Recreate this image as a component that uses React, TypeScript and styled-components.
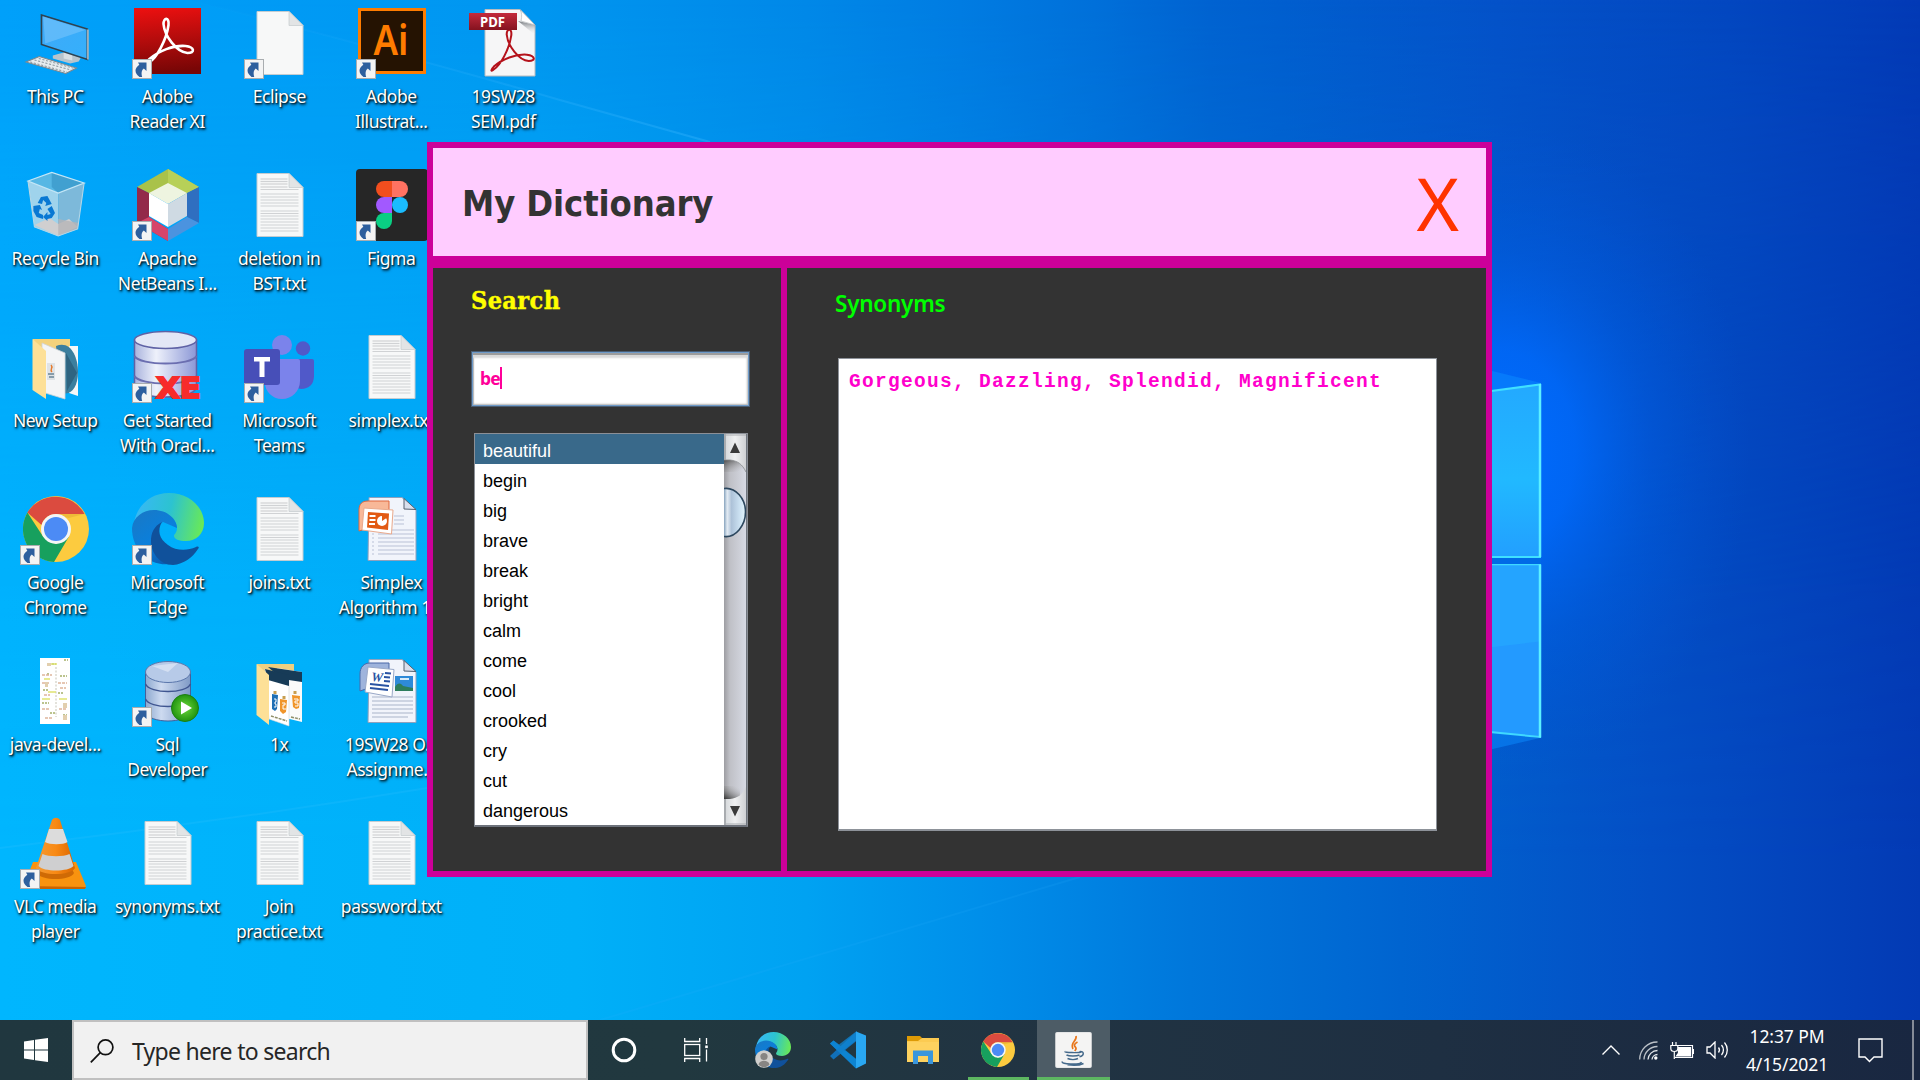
import React from 'react';
import styled, { createGlobalStyle } from 'styled-components';

const GlobalStyle = createGlobalStyle`
  html, body { margin: 0; padding: 0; overflow: hidden; }
  * { box-sizing: border-box; }
`;

const uiFont = `'Noto Sans', 'Open Sans', sans-serif`;

/* ---------- Desktop shell ---------- */

const Screen = styled.div`
  position: relative;
  width: 1920px;
  height: 1080px;
  overflow: hidden;
  display: flex;
  flex-direction: column;
  font-family: ${uiFont};
`;

const WallpaperSvg = styled.svg`
  position: absolute;
  inset: 0;
  width: 1920px;
  height: 1080px;
`;

const Desktop = styled.main`
  position: relative;
  flex: 1;
  padding-top: 7px;
`;

const IconGrid = styled.div`
  display: grid;
  grid-template-rows: repeat(6, 162px);
  grid-auto-columns: 112px;
  grid-auto-flow: column;
`;

const Shortcut = styled.div`
  display: flex;
  flex-direction: column;
  align-items: center;
`;

const IconBox = styled.div`
  position: relative;
  width: 72px;
  height: 72px;

  > svg {
    display: block;
    overflow: visible;
  }
`;

const Badge = styled.svg`
  position: absolute;
  left: 0;
  bottom: 0;
`;

const Label = styled.span`
  margin-top: 4.5px;
  padding-right: 1.5px;
  font-size: 17.5px;
  line-height: 25px;
  letter-spacing: -0.42px;
  color: #fff;
  text-align: center;
  white-space: pre;
  text-shadow: 1px 1px 2px rgba(0, 0, 0, 0.95), 1px 2px 3px rgba(0, 0, 0, 0.6);
`;

/* ---------- Dictionary window ---------- */

const magenta = '#cc0099';

const Frame = styled.section`
  position: absolute;
  left: 427px;
  top: 142px;
  width: 1065px;
  height: 735px;
  border: 6px solid ${magenta};
  background: #333;
  display: flex;
  flex-direction: column;
`;

const Header = styled.header`
  height: 120px;
  border-bottom: 12px solid ${magenta};
  background: #ffccff;
  display: flex;
  justify-content: space-between;
  align-items: center;
  padding: 0 27px 0 29px;
`;

const Title = styled.h1`
  margin: 4px 0 0;
  font: bold 36px/48px 'DejaVu Sans Condensed', 'DejaVu Sans', sans-serif;
  font-stretch: condensed;
  letter-spacing: -0.1px;
  color: #333;
`;

const CloseButton = styled.button`
  border: 0;
  padding: 2px 0 0;
  background: none;
  color: #ff3300;
  font: 72.5px/90px 'Noto Sans', sans-serif;
`;

const Body = styled.div`
  flex: 1;
  display: flex;
`;

const SearchPane = styled.div`
  width: 354px;
  border-right: 6px solid ${magenta};
  padding-left: 38px;
  display: flex;
  flex-direction: column;
`;

const SearchTitle = styled.h2`
  margin: 0;
  height: 83px;
  padding-top: 16.5px;
  font: bold 25px/32px 'DejaVu Serif Condensed', 'DejaVu Serif', serif;
  font-stretch: condensed;
  letter-spacing: 0.4px;
  -webkit-text-stroke: 0.4px #ffff00;
  color: #ffff00;
`;

const Field = styled.div`
  width: 279px;
  height: 56px;
  border: 2px solid #6f9bc9;
  outline: 1px solid #4a5d73;
  outline-offset: -1px;
  background: #fff;
  box-shadow: inset 0 2px 0 #9c9c9c, inset 0 5px 2px #dadada, inset 1px 0 1px #aaa, inset -1px -1px 2px #b5b5b5;
  padding: 0 0 2px 7px;
  display: flex;
  align-items: center;
  font: bold 17.5px/24px 'Noto Sans', sans-serif;
  letter-spacing: -0.8px;
  color: #ff0099;
`;

const Caret = styled.span`
  width: 2px;
  height: 22px;
  background: #ff0099;
`;

const ListBox = styled.div`
  margin: 26px 0 0 3px;
  width: 274px;
  height: 394px;
  border: 1px solid #8b8f96;
  border-bottom: 2px solid #6d727b;
  background: #fff;
  display: flex;
`;

const Words = styled.ul`
  flex: 1;
  margin: 0;
  padding: 0;
  list-style: none;
  overflow: hidden;
`;

const Word = styled.li<{ $selected?: boolean }>`
  height: 30px;
  padding: 4px 0 0 8px;
  font: 18px/26px 'Liberation Sans', Arial, sans-serif;
  color: ${(p) => (p.$selected ? '#fff' : '#000')};
  background: ${(p) => (p.$selected ? '#39698a' : 'transparent')};
`;

const ResultPane = styled.div`
  flex: 1;
  padding-left: 48px;
`;

const ResultTitle = styled.h2`
  margin: 0;
  height: 90px;
  padding-top: 20px;
  font: 600 22.5px/32px 'Noto Sans', sans-serif;
  letter-spacing: -0.25px;
  color: #00ff00;
`;

const ResultArea = styled.div`
  margin-left: 3px;
  width: 599px;
  height: 473px;
  border: 1px solid #8d9299;
  border-bottom-width: 2px;
  background: #fff;
  padding: 11px 10px;
  font: bold 19.5px/25px 'Liberation Mono', 'Courier New', monospace;
  letter-spacing: 1.3px;
  color: #ff00cc;
  white-space: pre;
`;

/* ---------- Taskbar ---------- */

const Taskbar = styled.footer`
  position: relative;
  height: 60px;
  display: flex;
  background: linear-gradient(90deg, #20373f 0%, #21383f 35%, #213442 52%, #1e2f42 75%, #192741 100%);
`;

const TaskButton = styled.div<{ $w: number; $active?: boolean }>`
  position: relative;
  width: ${(p) => p.$w}px;
  height: 60px;
  display: flex;
  align-items: center;
  justify-content: center;
  background: ${(p) => (p.$active ? '#4d5c66' : 'transparent')};
`;

const Running = styled.i<{ $w: number }>`
  position: absolute;
  bottom: 0;
  width: ${(p) => p.$w}px;
  height: 3px;
  background: #5db761;
`;

const SearchBox = styled.div`
  width: 516px;
  height: 60px;
  border: 2px solid #c0c0c0;
  background: #f1f1f1;
  display: flex;
  align-items: center;
  padding: 2px 0 0 16px;
  gap: 18px;
  font-size: 23px;
  letter-spacing: -0.72px;
  color: #262626;
`;

const Tray = styled.div`
  margin-left: auto;
  height: 60px;
  display: flex;
  align-items: center;
`;

const TrayIcons = styled.div`
  display: flex;
  align-items: center;
  gap: 12px;
`;

const Clock = styled.div`
  width: 96px;
  margin-left: 10px;
  text-align: center;
  color: #fff;
  font-size: 17.5px;
  line-height: 28px;
  letter-spacing: -0.1px;
`;

const Notifications = styled.svg`
  margin-left: 23px;
`;

const ShowDesktop = styled.div`
  width: 8px;
  height: 60px;
  margin-left: 29px;
  border-left: 2px solid #858c98;
`;

const IconHolder = styled.div`
  position: relative;
  width: 36px;
  height: 36px;
`;

const Profile = styled.svg`
  position: absolute;
  left: 0;
  bottom: 0;
`;

const WifiSvg = styled.svg`
  margin-left: 7px;
`;

/* ---------- Icon drawings ---------- */

const ShortcutBadge = () => (
  <Badge width="20" height="20" viewBox="0 0 20 20">
    <rect x=".5" y=".5" width="19" height="19" fill="#f4f4f4" stroke="#a9adb0" />
    <path d="M6 3.500h8.500v8.500l-2.700-2.600c-2 1.600-2.800 4-1.600 8.600H7.500c-5-4-5.500-8.500-.2-12.300z" fill="#2d5f9e" />
  </Badge>
);

const ThisPC = () => (
  <svg width="72" height="72" viewBox="0 0 72 72">
    <defs>
      <linearGradient id="pcScreen" x1="0" y1="0" x2="1" y2="1">
        <stop offset="0" stopColor="#3fa9f8" /><stop offset="1" stopColor="#35b0fb" />
      </linearGradient>
    </defs>
    <g transform="translate(1.500 .5) scale(1.080 1)">
      <path d="M29 48l10-3 16 5-2 4-8 2-16-5z" fill="#b8c4cc" />
      <path d="M39 44l8 3v6l-8-2z" fill="#d9e0e4" />
      <path d="M18.500 7.500L61 21.500V52L18.500 37z" fill="url(#pcScreen)" stroke="#30424f" strokeWidth="1.500" />
      <path d="M20 9l39 13.500L22 36z" fill="#7cc6fb" opacity=".55" />
      <path d="M61.500 22v30" stroke="#b9c0c5" strokeWidth="1.400" />
      <path d="M4 54.500L16.500 49 51 60.500 41 66z" fill="#e6ebee" stroke="#7b868d" />
      <path d="M8 54.500l34 10M12 52.500l34 10M16 51l33 10" stroke="#8d989f" strokeWidth="1" strokeDasharray="2 1.500" />
    </g>
  </svg>
);

const RecycleBin = () => (
  <svg width="72" height="72" viewBox="0 0 72 72">
    <g transform="translate(1.500 0) scale(1.080 1)">
      <path d="M6 12L28 3.500 58 14 34 24z" fill="#56b7e4" />
      <path d="M28 3.500V18l6 6 24-10z" fill="#3996c8" opacity=".7" />
      <path d="M6 12l28 12v43L12 58z" fill="#9fd3ec" />
      <path d="M58 14L34 24v43l18-7z" fill="#7db9da" />
      <path d="M12 56l14-7 8 6v12zM34 55l10-5 8 8-18 9z" fill="#d0cfd0" />
      <path d="M34 50v17l18-7 1-6z" fill="#b5b4b6" opacity=".8" />
      <path d="M6 12L28 3.500 58 14 34 24z" fill="none" stroke="#c4e6f6" strokeWidth="1.200" />
      <path d="M6 12l6 46 22 9 18-7 6-46" fill="none" stroke="#b7d7e6" strokeWidth="1" />
      <g fill="#0878d3">
        <path d="M15 34l3-6 6-1 3 6 1 2-6 2 1-3-3-3-1 4z" />
        <path d="M11 37l6-1 2 5-2-1-1 4 4 2v4l-6-2-3-6z" />
        <path d="M28 37l3 7-3 5-4 1v2l-4-4 4-5v3l3-1-3-5z" />
      </g>
    </g>
  </svg>
);

const NewSetup = () => (
  <svg width="72" height="72" viewBox="0 0 72 72">
    <path d="M13 8h37v48H13z" fill="#f3d27c" />
    <path d="M49 15h9v50l-9-3z" fill="#f5f7f8" />
    <path d="M36 15c14-6 22 10 22 26s-8 25-17 20z" fill="#3c7f9e" />
    <path d="M46 22l11 20-10 18z" fill="#2f6480" />
    <path d="M22 12l23 10v46l-23-7z" fill="#f4f5f6" stroke="#cfd3d5" strokeWidth=".8" />
    <rect x="27" y="32" width="8" height="17" fill="#dfe3e6" />
    <path d="M31 34c3 3-2 4 1 7" stroke="#e7792b" strokeWidth="1.400" fill="none" />
    <path d="M28 43h6M29 46h5" stroke="#6b8597" strokeWidth="1.500" />
    <path d="M12.500 8L26 20v48L12.500 59z" fill="#fde097" />
  </svg>
);

const ChromeMark = ({ size }: { size: number }) => (
  <svg width={size} height={size} viewBox="0 0 66 66">
    <circle cx="33" cy="33" r="33" fill="#fccb3f" />
    <path d="M4.400 16.500A33 33 0 0 1 61.600 18H33a15 15 0 0 0-14.500 11z" fill="#db4b3f" />
    <path d="M4.400 16.500A33 33 0 0 0 31 66l15-25.500-13 7.500L20 40.500z" fill="#17a05e" />
    <path d="M33 18h28.600l-16 4z" fill="#d9a12c" opacity=".4" />
    <circle cx="33" cy="33" r="15" fill="#f3f5f6" />
    <circle cx="33" cy="33" r="12" fill="#4c8bf5" />
  </svg>
);

const ChromeDesktop = () => (
  <svg width="72" height="72" viewBox="0 0 72 72">
    <g transform="translate(3 3)"><ChromeMark size={66} /></g>
  </svg>
);

const EdgeMark = ({ size }: { size: number }) => (
  <svg width={size} height={size} viewBox="0 0 72 72">
    <defs>
      <linearGradient id="edgeTop" x1="0" y1=".4" x2="1" y2=".55">
        <stop offset="0" stopColor="#38b8f6" /><stop offset=".5" stopColor="#2cc3d0" /><stop offset="1" stopColor="#69e957" />
      </linearGradient>
      <linearGradient id="edgeMid" x1="0" y1="0" x2=".6" y2="1">
        <stop offset="0" stopColor="#1a78c4" /><stop offset=".6" stopColor="#0b7fdb" /><stop offset="1" stopColor="#0a5fb5" />
      </linearGradient>
    </defs>
    <path d="M2 30C5 12 19 0 37 0c20 0 35 14 35 30 0 11-8 18-18 18-7 0-12-2-12-5 0-2 3-3 3-8 0-7-6-13-15-15C17 17 6 22 2 30z" fill="url(#edgeTop)" />
    <path d="M0 35c1-11 11-18 22-18 13 0 23 9 23 18l-14-6C24 32 20 42 24 54c3 8 9 14 15 17C17 74 0 57 0 35z" fill="url(#edgeMid)" />
    <path d="M30 29c-8 4-11 11-11 19 0 12 9 24 22 24 11-1 19-7 25-16 2-2 0-3-2-2-9 4-20 4-28-2-9-6-11-15-6-23z" fill="#10519b" />
  </svg>
);

const JavaDev = () => (
  <svg width="72" height="72" viewBox="0 0 72 72">
    <rect x="20" y="3" width="30" height="66" fill="#fff" />
    <path d="M44 5h4M32 9h4M27 19h2M40 21h7M23 35h5M38 38h5M22 48h7M30 58h5M43 60h4" stroke="#a5b06a" strokeWidth="1.500" strokeDasharray="2 1" />
    <path d="M22 20h10M22 28h8M38 28h9M24 40h6M40 33h6M22 54h7M39 54h8M25 63h8" stroke="#deb59c" strokeWidth="1.300" strokeDasharray="3 1" />
    <path d="M36 12v50" stroke="#b9b6a4" strokeWidth=".8" strokeDasharray="2 1.500" />
    <path d="M27 8h4v3h-4zM43 48h4v5h-4zM43 60h4v5h-4zM25 27h3v5h-3z" fill="#e2cfae" />
    <path d="M31 9h6M22 44h8M39 44h8M24 24h6M28 37h8" stroke="#e0e370" strokeWidth="1.500" />
  </svg>
);

const Vlc = () => (
  <svg width="72" height="72" viewBox="0 0 72 72">
    <defs>
      <linearGradient id="vlcOrange" x1="0" x2="1">
        <stop offset="0" stopColor="#f39a34" /><stop offset=".5" stopColor="#f98a14" /><stop offset="1" stopColor="#d96500" />
      </linearGradient>
    </defs>
    <path d="M13 45h43l10 24-1 2H3z" fill="#f8930f" />
    <path d="M4 69l62 1-1 2H3z" fill="#c86403" />
    <path d="M21 48h29l4 8c-4 8-33 8-37 0z" fill="#cf6a05" />
    <path d="M32 3c2-3 6-3 8 0l15 48c-5 8-34 8-39 0z" fill="url(#vlcOrange)" />
    <path d="M29 12h14l4.500 13c-4 3-18 3-22.500 0z" fill="#dcdcdc" />
    <path d="M22.500 37c6 3 21 3 27 0l4 12c-5 6-30 6-35 0z" fill="#cfcfd0" />
  </svg>
);

const AcrobatPath = ({ stroke, transform, w = 3.4 }: { stroke: string; transform?: string; w?: number }) => (
  <path
    transform={transform}
    d="M15 58C22 54 32 36 34 21c1-8-5-8-5-1 1 12 13 28 24 29 8 0 7-6-2-7-12-1-27 5-36 13-4 4-3 6 0 3z"
    fill="none"
    stroke={stroke}
    strokeWidth={w}
    strokeLinejoin="round"
  />
);

const AdobeReader = () => (
  <svg width="72" height="72" viewBox="0 0 72 72">
    <defs>
      <linearGradient id="reader" x1="0" y1="0" x2=".1" y2="1">
        <stop offset="0" stopColor="#ee1010" /><stop offset=".5" stopColor="#b50c0c" /><stop offset="1" stopColor="#790606" />
      </linearGradient>
    </defs>
    <rect x="2" y="1" width="67" height="66" fill="url(#reader)" />
    <AcrobatPath stroke="#fff" w={2.6} transform="translate(2.500 -3)" />
  </svg>
);

const NetBeans = () => (
  <svg width="72" height="72" viewBox="0 0 72 72">
    <path d="M36 0L67 18 36 34 5 18z" fill="#a9c24a" />
    <path d="M36 0L67 18 55 24 36 14z" fill="#b7d058" />
    <path d="M5 18l12 6v24l19 12v12L5 54z" fill="#93294a" />
    <path d="M5 54l12-6 19 12v12z" fill="#d6456a" />
    <path d="M67 18v36L55 48V24z" fill="#2f6fc0" />
    <path d="M67 54L36 72V60l19-12z" fill="#4b93df" />
    <path d="M36 14l19 10-19 11-19-11z" fill="#eef4e0" />
    <path d="M17 24l19 11v23L17 47z" fill="#fff" />
    <path d="M55 24L36 35v23l19-11z" fill="#cfdae3" />
  </svg>
);

const OracleXE = () => (
  <svg width="72" height="72" viewBox="0 0 72 72">
    <defs>
      <linearGradient id="xe" x1="0" x2="1">
        <stop offset="0" stopColor="#a9b3dd" /><stop offset=".35" stopColor="#eef1fb" /><stop offset="1" stopColor="#8b97d6" />
      </linearGradient>
    </defs>
    <path d="M2.500 9v48c4 12 58 12 62 0V9z" fill="url(#xe)" stroke="#5f62a5" strokeWidth="1.500" />
    <path d="M2.500 25c5 10 57 10 62 0M2.500 45c5 10 57 10 62 0" fill="none" stroke="#6b6eb0" strokeWidth="2" />
    <ellipse cx="33.500" cy="9" rx="31" ry="8.500" fill="#e3e7f6" stroke="#5f62a5" strokeWidth="1.500" />
    <text x="24" y="67" fontFamily="DejaVu Sans" fontWeight="bold" fontSize="29" fill="#f72b2b" stroke="#f72b2b" strokeWidth="2" textLength="45" lengthAdjust="spacingAndGlyphs">XE</text>
  </svg>
);

const SqlDeveloper = () => (
  <svg width="72" height="72" viewBox="0 0 72 72">
    <defs>
      <linearGradient id="sqlBody" x1="0" x2="1">
        <stop offset="0" stopColor="#8ea9cf" /><stop offset=".35" stopColor="#cddaf0" /><stop offset="1" stopColor="#7f9ac6" />
      </linearGradient>
      <radialGradient id="sqlPlay"><stop offset="0" stopColor="#6cd83a" /><stop offset="1" stopColor="#219410" /></radialGradient>
    </defs>
    <path d="M13.500 17v40c3 12 42 12 45 0V17z" fill="url(#sqlBody)" stroke="#44609a" />
    <path d="M13.500 29c4 10 41 10 45 0M13.500 44c4 10 41 10 45 0" fill="none" stroke="#3f5590" strokeWidth="1.500" />
    <ellipse cx="36" cy="17" rx="22.500" ry="10.500" fill="#b7cae8" stroke="#5a76ab" />
    <path d="M20 11l16 6 10-9" fill="#dfe8f6" opacity=".7" />
    <circle cx="53" cy="53" r="13.500" fill="url(#sqlPlay)" stroke="#1c7f12" />
    <path d="M49 46.500v13l11-6.500z" fill="#fff" />
  </svg>
);

const paperLines = [8, 10.5, 13, 16, 18.5, 23, 26, 29, 32, 35, 40, 42.5, 45, 48, 51, 54, 57, 60];

const Paper = ({ lined }: { lined?: boolean }) => (
  <svg width="72" height="72" viewBox="0 0 72 72">
    <path d="M13 4.500h32L59 18.500V67.500H13z" fill="#f7f8f8" stroke="#c3ccd1" />
    {lined &&
      paperLines.map((y) => (
        <path key={y} d={`M16.500 ${y + 2}h${y < 18 ? 27 : 38}`} stroke="#d0d2d4" strokeWidth="1.200" />
      ))}
    <path d="M45 4.500V18.500H59z" fill="#e2e4e5" stroke="#c9ced1" strokeWidth=".8" />
  </svg>
);

const Teams = () => (
  <svg width="72" height="72" viewBox="0 0 72 72">
    <circle cx="38" cy="14" r="10" fill="#7b83eb" />
    <circle cx="59" cy="17.500" r="7.200" fill="#5059c9" />
    <path d="M48 28h20a2 2 0 0 1 2 2v15c0 8-5 13-13 13l-9-2z" fill="#5059c9" />
    <path d="M30 28h24a2 2 0 0 1 2 2v20c0 10-8 18-18 18s-17-8-17-16z" fill="#7b83eb" />
    <rect x="0" y="18" width="36" height="36" rx="3" fill="#474fb8" />
    <path d="M10 26h16v4.500h-5.500v15.500h-5v-15.500H10z" fill="#fff" />
  </svg>
);

const FolderShots = () => (
  <svg width="72" height="72" viewBox="0 0 72 72">
    <path d="M13 9h37v48H13z" fill="#eecf80" />
    <path d="M33 13l25 4v50l-25-6z" fill="#fbfbfa" />
    <path d="M24 12l34 5v10l-20-3z" fill="#173b57" />
    <path d="M21 14l24 11v46l-20-7z" fill="#fff" stroke="#d4d7d8" strokeWidth=".6" />
    <path d="M21 14l24 6v11l-21-6z" fill="#173b57" />
    <path d="M28 39l6 1-1 14-2 2-3-2z" fill="#1f6fb5" />
    <path d="M36 44l7 1-1 12-3 2-3-3z" fill="#f0952a" />
    <path d="M48 40l8 1-1 12-3 1-3-2z" fill="#f0952a" />
    <path d="M30 44h2v3h-1v2h1v3h-2M38 48h3v2h-2v4h3M50 44h4v2h-3v2h3v3h-3" stroke="#fff" fill="none" strokeWidth="1" />
    <path d="M31 36v3M40 41v3M51 36v3" stroke="#c79f52" strokeWidth="3" />
    <path d="M27 61l16 5M47 62l9 2" stroke="#8f8f6a" strokeWidth="1.500" strokeDasharray="3 1" />
    <path d="M12.500 9L25 20v50L12.500 60z" fill="#fde097" />
  </svg>
);

const Illustrator = () => (
  <svg width="72" height="72" viewBox="0 0 72 72">
    <rect x="3.500" y="2.500" width="65" height="63" fill="#251302" stroke="#ff7c00" strokeWidth="3" />
    <text x="17.500" y="48" fontFamily="Noto Sans" fontWeight="600" fontSize="42" fill="#ff7c00" textLength="35" lengthAdjust="spacingAndGlyphs">Ai</text>
  </svg>
);

const Figma = () => (
  <svg width="72" height="72" viewBox="0 0 72 72">
    <rect width="72" height="72" rx="4" fill="#262626" />
    <path d="M36 12v16h-8a8 8 0 0 1 0-16z" fill="#f24e1e" />
    <path d="M36 12h8a8 8 0 0 1 0 16h-8z" fill="#ff7262" />
    <path d="M36 28v16h-8a8 8 0 0 1 0-16z" fill="#a259ff" />
    <circle cx="44" cy="36" r="8" fill="#1abcfe" />
    <path d="M36 44v8a8 8 0 1 1-8-8z" fill="#0acf83" />
  </svg>
);

const OfficeSheet = () => (
  <>
    <path d="M13 4.500h33L60 17v50.500H12z" fill="#f1f4fb" stroke="#8fa1bd" />
    <path d="M48 5.500V16l12 .5z" fill="#d9dfec" stroke="#55606f" strokeWidth="1" />
  </>
);

const PowerPoint = () => (
  <svg width="72" height="72" viewBox="0 0 72 72">
    <OfficeSheet />
    <path d="M38 23h10M38 27h10M38 31h10M16 37h42M22 41h36M22 45h36M22 49h36M22 53h36M22 57h36M22 61h36M16 41h2M16 45h2M16 49h2M16 53h2M16 57h2M16 61h2" stroke="#b9c1d6" />
    <path d="M3 38V17c0-6 3-9 9-9h21v20z" fill="#f8b898" stroke="#e0673c" />
    <path d="M8 15l29 2L35.500 41 6 37z" fill="#fff" stroke="#e9a98c" />
    <path d="M12 19l21 1.500L32 37l-21-2.500z" fill="#e25a13" />
    <path d="M13.500 23h6M13.500 27h6M13 31h6" stroke="#fff" strokeWidth="2" />
    <circle cx="26" cy="28" r="5" fill="#fff" /><path d="M26 28V22l6 2z" fill="#e25a13" />
  </svg>
);

const WordDoc = () => (
  <svg width="72" height="72" viewBox="0 0 72 72">
    <OfficeSheet />
    <path d="M16 42h41M16 46h41M16 50h41M16 54h41M16 58h41M16 62h36" stroke="#a9b4c9" />
    <rect x="39" y="21" width="18" height="15" fill="#2e8ad8" />
    <path d="M39 32c3-5 6-4 8-1l10 2v3H39z" fill="#2d7d5c" /><path d="M44 24h9" stroke="#d7ecfa" strokeWidth="2" />
    <path d="M4 36V19c0-7 4-11 10-11h19v18z" fill="#9fb4dc" stroke="#4a68a8" />
    <path d="M12 12l26 2.500L36 42 9 37z" fill="#fff" stroke="#9aa9c8" />
    <text x="15" y="26" fontFamily="Liberation Serif" fontWeight="bold" fontStyle="italic" fontSize="13" fill="#2a54a3" transform="rotate(5 14 26)">W</text>
    <path d="M29 18l6 .5M28 22l6 .5M28 26l6 .5M14 29l19 2M14 33l18 2" stroke="#2a54a3" strokeWidth="2" />
  </svg>
);

const PdfFile = () => (
  <svg width="72" height="72" viewBox="0 0 72 72">
    <defs>
      <linearGradient id="pdfTag" x1="0" x2="0" y1="0" y2="1">
        <stop offset="0" stopColor="#c42b3c" /><stop offset="1" stopColor="#84121f" />
      </linearGradient>
      <linearGradient id="pdfCurl" x1="0" x2="0" y1="0" y2="1">
        <stop offset="0" stopColor="#73787d" /><stop offset="1" stopColor="#f6f6f7" stopOpacity="0" />
      </linearGradient>
    </defs>
    <path d="M17 2.500h35L67 18v51H17z" fill="#f6f6f7" stroke="#b9bcc0" />
    <path d="M50 14l17 4v10z" fill="url(#pdfCurl)" />
    <path d="M52 2.500L67 18l-14-4c1-5 1-8-1-11.500z" fill="#fff" stroke="#a8acb0" strokeWidth=".6" />
    <AcrobatPath stroke="#b5121b" w={2.2} transform="translate(12 9) scale(.92)" />
    <rect x="1" y="6" width="48" height="17" fill="url(#pdfTag)" />
    <text x="12" y="19.500" fontFamily="Noto Sans" fontWeight="bold" fontSize="15" fill="#fff" textLength="25" lengthAdjust="spacingAndGlyphs">PDF</text>
  </svg>
);

const Wallpaper = () => (
  <WallpaperSvg viewBox="0 0 1920 1080">
    <defs>
      <linearGradient id="skyTop">
        <stop offset="0" stopColor="#009ffa" /><stop offset=".28" stopColor="#0096f0" /><stop offset=".42" stopColor="#0088e8" />
        <stop offset=".5" stopColor="#007ce2" /><stop offset=".57" stopColor="#0070da" /><stop offset=".63" stopColor="#0063d1" />
        <stop offset=".78" stopColor="#0452c9" /><stop offset=".9" stopColor="#0347c0" /><stop offset="1" stopColor="#033ab6" />
      </linearGradient>
      <linearGradient id="skyBottom">
        <stop offset="0" stopColor="#00b6fe" /><stop offset=".3" stopColor="#00b0f8" /><stop offset=".42" stopColor="#00a2f2" />
        <stop offset=".52" stopColor="#008de9" /><stop offset=".62" stopColor="#0077db" /><stop offset=".73" stopColor="#0064d0" />
        <stop offset=".86" stopColor="#034fc5" /><stop offset="1" stopColor="#033ab4" />
      </linearGradient>
      <linearGradient id="fade" x1="0" y1="0" x2="0" y2="1">
        <stop offset="0" stopColor="#000" /><stop offset=".55" stopColor="#d8d8d8" /><stop offset=".8" stopColor="#fff" />
      </linearGradient>
      <mask id="lower"><rect width="1920" height="1080" fill="url(#fade)" /></mask>
      <radialGradient id="glow">
        <stop offset="0" stopColor="#006cff" /><stop offset=".3" stopColor="#0069fb" stopOpacity=".85" />
        <stop offset=".6" stopColor="#0060ea" stopOpacity=".4" /><stop offset="1" stopColor="#0055d8" stopOpacity="0" />
      </radialGradient>
      <linearGradient id="paneTop" x1="0" y1="0" x2="0" y2="1">
        <stop offset="0" stopColor="#23a9ff" /><stop offset=".55" stopColor="#21b9ff" /><stop offset="1" stopColor="#229fff" />
      </linearGradient>
      <linearGradient id="ray"><stop offset="0" stopColor="#3db8ff" stopOpacity="0" /><stop offset="1" stopColor="#3db8ff" stopOpacity=".5" /></linearGradient>
    </defs>
    <rect width="1920" height="1080" fill="url(#skyTop)" />
    <rect width="1920" height="1080" fill="url(#skyBottom)" mask="url(#lower)" />
    <ellipse cx="1500" cy="450" rx="250" ry="330" fill="url(#glow)" />
    <path d="M190 0C300 28 430 62 560 100L710 142H427V600H0V0z" fill="#00b0ff" opacity=".1" />
    <path d="M190 0C300 28 430 62 560 100L710 142" fill="none" stroke="url(#ray)" strokeWidth="2" opacity=".7" />
    <path d="M0 848Q220 822 440 786" fill="none" stroke="#35c4ff" strokeWidth="2" opacity=".2" />
    <path d="M600 1020L1080 877" fill="none" stroke="#2aaeff" strokeWidth="2" opacity=".14" />
    <path d="M1480 368l61 15-61 9zM1480 731v21l60-14z" fill="#0c8cff" opacity=".5" />
    <path d="M1480 392.500L1540 384.500V557H1480z" fill="url(#paneTop)" stroke="#3fe0ff" strokeWidth="2" />
    <path d="M1480 564.500H1540V737L1480 731z" fill="#239aff" stroke="#3fd8ff" strokeWidth="2" />
    <path d="M1480 648.500l60-7V565.500h-60z" fill="#24a6ff" opacity=".8" />
    <path d="M1540 384v173M1540 564.500v173" stroke="#5cf0ff" strokeWidth="2.500" />
    <rect x="1480" y="558" width="61" height="6" fill="#006ae6" />
  </WallpaperSvg>
);

/* ---------- Scroll bar ---------- */

const ScrollBar = () => (
  <svg width="23" height="391" viewBox="0 0 23 391">
    <defs>
      <linearGradient id="track"><stop offset="0" stopColor="#9d9da2" /><stop offset=".25" stopColor="#bfc0c6" /><stop offset="1" stopColor="#d8dbe5" /></linearGradient>
      <linearGradient id="btn"><stop offset="0" stopColor="#d2d5d8" /><stop offset=".5" stopColor="#eff0f1" /><stop offset="1" stopColor="#cfd1d4" /></linearGradient>
      <linearGradient id="thumb">
        <stop offset="0" stopColor="#87a3bd" /><stop offset=".15" stopColor="#e3ebf3" /><stop offset=".35" stopColor="#adc2d8" />
        <stop offset=".7" stopColor="#c9dff0" /><stop offset="1" stopColor="#e2f5fc" />
      </linearGradient>
      <linearGradient id="shade" x1="0" x2=".7" y1="0" y2="1"><stop offset="0" stopColor="#444" /><stop offset="1" stopColor="#aaa" stopOpacity="0" /></linearGradient>
      <linearGradient id="shadeUp" x1="0" x2=".7" y1="1" y2="0"><stop offset="0" stopColor="#333" /><stop offset="1" stopColor="#aaa" stopOpacity="0" /></linearGradient>
    </defs>
    <rect width="23" height="391" fill="url(#track)" />
    <rect y="25" width="20" height="13" fill="url(#shade)" />
    <rect y="352" width="16" height="13" fill="url(#shadeUp)" />
    <path d="M0 0h22v38c-4-8-8-11-16-12H0z" fill="url(#btn)" />
    <path d="M0 26h6c8 1 12 4 16 12" fill="none" stroke="#85888c" strokeWidth=".8" />
    <path d="M0 391h22v-38c-4 8-8 11-16 12H0z" fill="url(#btn)" />
    <path d="M1 0v26M1 365v26" stroke="#9a9da1" strokeWidth="1.500" />
    <path d="M0 1h22M0 390h22" stroke="#a9acb0" strokeWidth="1" />
    <path d="M6 19h10L11 8.500zM6 372h10l-5 10.500z" fill="#3a3a3a" />
    <path d="M0 54.500C12 53 21.500 65 21.500 78S12 104 0 102.500z" fill="url(#thumb)" />
    <path d="M0 54.500C12 53 21.500 65 21.500 78S12 104 0 102.500" fill="none" stroke="#2c475e" strokeWidth="1.600" />
    <path d="M22.500 0v391" stroke="#6f757d" />
  </svg>
);

/* ---------- Data ---------- */

type Item = { label: string; icon: React.ReactNode; link?: boolean };

const items: Item[] = [
  { label: 'This PC', icon: <ThisPC /> },
  { label: 'Recycle Bin', icon: <RecycleBin /> },
  { label: 'New Setup', icon: <NewSetup /> },
  { label: 'Google\nChrome', icon: <ChromeDesktop />, link: true },
  { label: 'java-devel...', icon: <JavaDev /> },
  { label: 'VLC media\nplayer', icon: <Vlc />, link: true },
  { label: 'Adobe\nReader XI', icon: <AdobeReader />, link: true },
  { label: 'Apache\nNetBeans I...', icon: <NetBeans />, link: true },
  { label: 'Get Started\nWith Oracl...', icon: <OracleXE />, link: true },
  { label: 'Microsoft\nEdge', icon: <EdgeMark size={72} />, link: true },
  { label: 'Sql\nDeveloper', icon: <SqlDeveloper />, link: true },
  { label: 'synonyms.txt', icon: <Paper lined /> },
  { label: 'Eclipse', icon: <Paper />, link: true },
  { label: 'deletion in\nBST.txt', icon: <Paper lined /> },
  { label: 'Microsoft\nTeams', icon: <Teams />, link: true },
  { label: 'joins.txt', icon: <Paper lined /> },
  { label: '1x', icon: <FolderShots /> },
  { label: 'Join\npractice.txt', icon: <Paper lined /> },
  { label: 'Adobe\nIllustrat...', icon: <Illustrator />, link: true },
  { label: 'Figma', icon: <Figma />, link: true },
  { label: 'simplex.txt', icon: <Paper lined /> },
  { label: 'Simplex\nAlgorithm 1...', icon: <PowerPoint /> },
  { label: '19SW28 O...\nAssignme...', icon: <WordDoc /> },
  { label: 'password.txt', icon: <Paper lined /> },
  { label: '19SW28\nSEM.pdf', icon: <PdfFile /> },
];

const words = [
  'beautiful', 'begin', 'big', 'brave', 'break', 'bright', 'calm',
  'come', 'cool', 'crooked', 'cry', 'cut', 'dangerous',
];

export default function App() {
  return (
    <Screen>
      <GlobalStyle />
      <Wallpaper />
      <Desktop>
        <IconGrid>
          {items.map((it) => (
            <Shortcut key={it.label}>
              <IconBox>
                {it.icon}
                {it.link && <ShortcutBadge />}
              </IconBox>
              <Label>{it.label}</Label>
            </Shortcut>
          ))}
        </IconGrid>

        <Frame>
          <Header>
            <Title>My Dictionary</Title>
            <CloseButton>X</CloseButton>
          </Header>
          <Body>
            <SearchPane>
              <SearchTitle>Search</SearchTitle>
              <Field>be<Caret /></Field>
              <ListBox>
                <Words>
                  {words.map((w, i) => (
                    <Word key={w} $selected={i === 0}>{w}</Word>
                  ))}
                </Words>
                <ScrollBar />
              </ListBox>
            </SearchPane>
            <ResultPane>
              <ResultTitle>Synonyms</ResultTitle>
              <ResultArea>Gorgeous, Dazzling, Splendid, Magnificent</ResultArea>
            </ResultPane>
          </Body>
        </Frame>
      </Desktop>

      <Taskbar>
        <TaskButton $w={72}>
          <svg width="24" height="24" viewBox="0 0 24 24" fill="#fff">
            <path d="M0 3.400L10 2v9.500H0zM11 1.800L24 0v11.500H11zM0 12.500h10V22L0 20.600zM11 12.500h13V24l-13-1.800z" />
          </svg>
        </TaskButton>
        <SearchBox>
          <svg width="24" height="24" viewBox="0 0 24 24" fill="none" stroke="#111" strokeWidth="1.700">
            <circle cx="15.500" cy="8.300" r="7.400" /><path d="M10.300 13.700L.8 23.300" />
          </svg>
          Type here to search
        </SearchBox>
        <TaskButton $w={72}>
          <svg width="26" height="26" viewBox="0 0 26 26"><circle cx="13" cy="13" r="10.800" fill="none" stroke="#fff" strokeWidth="3" /></svg>
        </TaskButton>
        <TaskButton $w={72}>
          <svg width="24" height="24" viewBox="0 0 24 24" fill="none" stroke="#fff" strokeWidth="1.300">
            <path d="M.7 0v3.500h15V0M.7 24v-3.500h15V24" /><rect x=".7" y="6.500" width="15" height="11" />
            <path d="M22.500 0v6M22.500 11.500V23.500" /><rect x="21.200" y="7.500" width="2.600" height="2.600" fill="#fff" stroke="none" />
          </svg>
        </TaskButton>
        <TaskButton $w={82}>
          <IconHolder>
            <EdgeMark size={36} />
            <Profile width="18" height="18" viewBox="0 0 18 18">
              <circle cx="9" cy="9" r="8.800" fill="#d0cfcd" />
              <circle cx="9" cy="6.500" r="3.600" fill="#878583" /><path d="M3.500 14.500c1-5 10-5 11 0-3 3.500-8 3.500-11 0z" fill="#878583" />
            </Profile>
          </IconHolder>
        </TaskButton>
        <TaskButton $w={68}>
          <svg width="36" height="38" viewBox="0 0 36 38">
            <path d="M0 12.500l3.500-3 24 19.500L26 37.500z" fill="#0a7fcb" />
            <path d="M0 25l3.500 3.500L27 9.500V0z" fill="#1170b8" />
            <path d="M26 .5L36 4.500v28L26 37.500z" fill="#29a7f2" />
            <path d="M26 .5v9L14 19l12 9.500v9L0 12.500 3.500 9.500 9 13.600z" fill="#0f86d4" opacity=".75" />
          </svg>
        </TaskButton>
        <TaskButton $w={82}>
          <svg width="32" height="28" viewBox="0 0 32 28">
            <path d="M0 0h13l2 2-1 4H0z" fill="#dd9a05" /><path d="M0 5h11l4-3h17v24H0z" fill="#fccb52" />
            <path d="M0 6h32v20H0z" fill="#ffd465" opacity=".7" />
            <path d="M6 28V14.500h20V28h-5v-8H11v8z" fill="#3a96dc" />
          </svg>
        </TaskButton>
        <TaskButton $w={68}>
          <ChromeMark size={34} />
          <Running $w={61} />
        </TaskButton>
        <TaskButton $w={5} />
        <TaskButton $w={73} $active>
          <svg width="37" height="36" viewBox="0 0 36 36" fill="none">
            <rect width="36" height="36" rx="2" fill="#f4f4f3" stroke="#d0d3d5" strokeWidth=".8" />
            <path d="M20.500 4c1.500 5-6.500 6.500-3 13M22 10c-4 2-3.500 4-1.800 5.500.8 1.200 0 2.500-1 3.500" stroke="#e8761b" strokeWidth="1.700" />
            <path d="M10 19.500c-3 1.300 15 1.600 16 .2M11 23c3 1.500 10 1.300 13 0M12 26.500c3 1.200 8 1.200 10.500 0M24 19.700c5-1 5 4 0 5M7 29.500c-3 3 18 3.500 19 .5M12 32.800c6 .8 12 .6 16-1.300" stroke="#44698a" strokeWidth="1.500" />
          </svg>
          <Running $w={73} />
        </TaskButton>

        <Tray>
          <TrayIcons>
            <svg width="18" height="10" viewBox="0 0 18 10" fill="none" stroke="#fff" strokeWidth="1.400"><path d="M.5 9.500L9 1l8.500 8.500" /></svg>
            <WifiSvg width="19" height="19" viewBox="0 0 19 19" fill="none" stroke="#e3e7ea" strokeWidth="1.300">
              <path d="M.7 18.500A17.500 17.500 0 0 1 18.500 1M5 18.500A13.300 13.300 0 0 1 18.500 5.500" opacity=".8" />
              <path d="M9 18.500A9.500 9.500 0 0 1 18.500 9.500M13 18.500a5.500 5.500 0 0 1 5.500-5" />
              <circle cx="16.800" cy="17" r="1.700" fill="#fff" stroke="none" />
            </WifiSvg>
            <svg width="24" height="17" viewBox="0 0 24 17" fill="none" stroke="#fff" strokeWidth="1.200">
              <path d="M8 3.500h14.500v12H5" /><path d="M8.500 5.500h12v8.500h-14l2-3z" fill="#fff" /><path d="M23.500 7v5" />
              <path d="M2.500 0v3M6 0v3M.8 3.500h7v3c0 4-7 4-7 0zM4.300 9.500V17" />
            </svg>
            <svg width="23" height="18" viewBox="0 0 23 18" fill="none" stroke="#fff" strokeWidth="1.300">
              <path d="M1 6h3l5-5v16l-5-5H1z" /><path d="M12.500 6.500a4 4 0 0 1 0 5M15.500 4a7.500 7.500 0 0 1 0 10M18.500 1.500a11.500 11.500 0 0 1 0 15" />
            </svg>
          </TrayIcons>
          <Clock>12:37 PM<br />4/15/2021</Clock>
          <Notifications width="25" height="25" viewBox="0 0 25 25" fill="none" stroke="#fff" strokeWidth="1.400">
            <path d="M1 1h23v18h-8l-4.500 4.500L7 19H1z" />
          </Notifications>
          <ShowDesktop />
        </Tray>
      </Taskbar>
    </Screen>
  );
}
